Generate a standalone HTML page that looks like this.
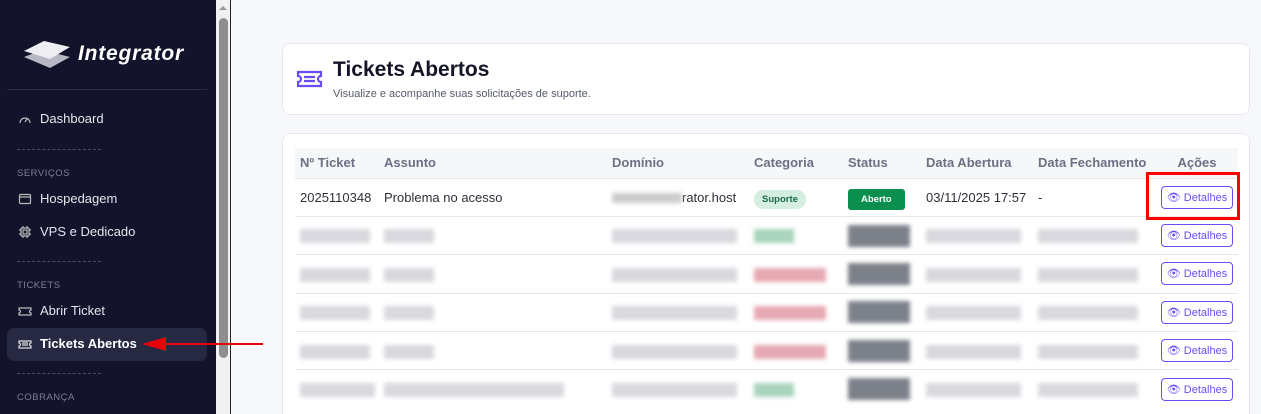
<!DOCTYPE html>
<html><head><meta charset="utf-8"><style>
*{box-sizing:border-box;margin:0;padding:0}
html{width:1261px;height:414px;overflow:hidden}
body{width:1261px;height:414px;overflow:hidden;background:#f7f8fb;font-family:"Liberation Sans",sans-serif;position:relative}
.sb{position:absolute;left:0;top:0;width:216px;height:414px;background:#13132b;color:#e4e6ef}
.scroll{position:absolute;left:216px;top:0;width:15px;height:414px;background:#f1f1f1;border-right:1px solid #222}
.thumb{position:absolute;left:219px;top:18px;width:9px;height:340px;background:#8e8e8e;border-radius:5px}
.item{position:absolute;left:18px;font-size:13px;display:flex;align-items:center;gap:8px}
.item svg{width:14px;height:14px}
.sec{position:absolute;left:17px;font-size:9.5px;color:#7d7f96;letter-spacing:.5px}
.dash{position:absolute;left:17px;width:84px;border-top:1px dashed #4a4c66}
.card{position:absolute;left:282px;width:968px;background:#fff;border-radius:8px;border:1px solid #e8e9ee}
th{font-size:13px;color:#6b7084;text-align:left;font-weight:bold;height:30px;background:#f6f7f9;padding-left:5px}
td{height:38.4px;border-top:1px solid #e6e7eb;font-size:13px;color:#2d2f3a;padding-left:5px;position:relative}
table{border-collapse:collapse;position:absolute;left:12px;top:14px;width:943px}
.btn{display:inline-flex;align-items:center;gap:3px;border:1px solid #6a4cf5;color:#6a4cf5;border-radius:4px;height:23px;padding:0 5px;font-size:11px;background:#fff}
.b{display:inline-block;height:14px;background:#d8d9df;filter:blur(2px);vertical-align:middle}
</style></head><body>
<div class="sb">
 <svg style="position:absolute;left:22px;top:37px" width="50" height="34" viewBox="0 0 50 34"><path d="M2 20 L20 13 L48 20 L28 31 Z" fill="#b8b8c4"/><path d="M2 14 L22 4 L48 10 L28 22 Z" fill="#eeeef2"/></svg>
 <div style="position:absolute;left:78px;top:42px;font-size:21px;font-style:italic;font-weight:bold;color:#fff;letter-spacing:.8px">Integrator</div>
 <div style="position:absolute;left:7px;top:89px;width:200px;border-top:1px solid #2c2e48"></div>
 <div class="item" style="top:111px"><svg viewBox="0 0 14 14" fill="none" stroke="#bbb" stroke-width="1.2"><path d="M2 11a5 5 0 1 1 10 0M7 10l2-3"/></svg>Dashboard</div>
 <div class="dash" style="top:149px"></div>
 <div class="sec" style="top:168px">SERVIÇOS</div>
 <div class="item" style="top:191px"><svg viewBox="0 0 14 14" fill="none" stroke="#bbb" stroke-width="1.2"><rect x="1.5" y="2.5" width="11" height="9" rx="1"/><path d="M1.5 5h11"/></svg>Hospedagem</div>
 <div class="item" style="top:224px"><svg viewBox="0 0 14 14" fill="none" stroke="#bbb" stroke-width="1.2"><rect x="3" y="3" width="8" height="8" rx="1"/><rect x="5" y="5" width="4" height="4"/><path d="M5 1v2M9 1v2M5 11v2M9 11v2M1 5h2M1 9h2M11 5h2M11 9h2"/></svg>VPS e Dedicado</div>
 <div class="dash" style="top:261px"></div>
 <div class="sec" style="top:280px">TICKETS</div>
 <div class="item" style="top:303px"><svg viewBox="0 0 14 14" fill="none" stroke="#bbb" stroke-width="1.2"><path d="M1 4h12v2a1.5 1.5 0 0 0 0 3v2H1V9a1.5 1.5 0 0 0 0-3z"/></svg>Abrir Ticket</div>
 <div style="position:absolute;left:7px;top:328px;width:200px;height:33px;background:#272842;border-radius:7px"></div>
 <div class="item" style="top:336px;font-weight:bold;color:#fff"><svg viewBox="0 0 14 14" fill="none" stroke="#ddd" stroke-width="1.2"><path d="M1 4h12v2a1.5 1.5 0 0 0 0 3v2H1V9a1.5 1.5 0 0 0 0-3z M4 6h6M4 8h6"/></svg>Tickets Abertos</div>
 <div class="dash" style="top:373px"></div>
 <div class="sec" style="top:392px">COBRANÇA</div>
</div>
<div class="scroll"></div><div class="thumb"></div>
<div style="position:absolute;left:219px;top:6px;width:0;height:0;border-left:4px solid transparent;border-right:4px solid transparent;border-bottom:4px solid #999"></div>
<svg style="position:absolute;left:140px;top:336px" width="125" height="16"><line x1="14" y1="8" x2="123" y2="8" stroke="#e8000b" stroke-width="2"/><path d="M2 8 L26 1 L26 15Z" fill="#e8000b"/></svg>
<div class="card" style="top:43px;height:72px">
 <svg style="position:absolute;left:13px;top:26px" width="27" height="18" viewBox="0 0 27 18" fill="none" stroke="#6a4cf5" stroke-width="2.2"><path d="M2 2h23v4a3 3 0 0 0 0 6v4H2v-4a3 3 0 0 0 0-6z"/><path d="M8 7h11M8 11h11"/></svg>
 <div style="position:absolute;left:50px;top:14px;font-size:21px;font-weight:bold;color:#151528">Tickets Abertos</div>
 <div style="position:absolute;left:50px;top:44px;font-size:11px;color:#555a6a">Visualize e acompanhe suas solicitações de suporte.</div>
</div>
<div class="card" style="top:133px;height:290px">
<table>
<tr><th style="width:84px">Nº Ticket</th><th style="width:228px">Assunto</th><th style="width:142px">Domínio</th><th style="width:94px">Categoria</th><th style="width:78px">Status</th><th style="width:112px">Data Abertura</th><th style="width:118px">Data Fechamento</th><th style="text-align:center">Ações</th></tr>
<tr><td>2025110348</td><td>Problema no acesso</td><td><span class="b" style="width:70px;height:10px;background:#ccc"></span>rator.host</td><td><span style="background:#d4efe2;color:#1c6b45;font-size:9.5px;font-weight:bold;padding:4px 8px;border-radius:9px">Suporte</span></td><td><span style="background:#0a8f4f;color:#fff;font-size:9.5px;font-weight:bold;padding:5px 13px;border-radius:3px">Aberto</span></td><td>03/11/2025 17:57</td><td>-</td><td style="text-align:center"><span class="btn">👁 Detalhes</span></td></tr>
<tr><td><span class="b" style="width:70px"></span></td><td><span class="b" style="width:50px"></span></td><td><span class="b" style="width:125px"></span></td><td><span class="b" style="width:40px;background:#a9d4bd"></span></td><td><span class="b" style="width:62px;height:22px;background:#7c8089"></span></td><td><span class="b" style="width:95px"></span></td><td><span class="b" style="width:100px"></span></td><td style="text-align:center"><span class="btn">👁 Detalhes</span></td></tr>
<tr><td><span class="b" style="width:70px"></span></td><td><span class="b" style="width:50px"></span></td><td><span class="b" style="width:125px"></span></td><td><span class="b" style="width:72px;background:#e6a9b3"></span></td><td><span class="b" style="width:62px;height:22px;background:#7c8089"></span></td><td><span class="b" style="width:95px"></span></td><td><span class="b" style="width:100px"></span></td><td style="text-align:center"><span class="btn">👁 Detalhes</span></td></tr>
<tr><td><span class="b" style="width:70px"></span></td><td><span class="b" style="width:50px"></span></td><td><span class="b" style="width:125px"></span></td><td><span class="b" style="width:72px;background:#e6a9b3"></span></td><td><span class="b" style="width:62px;height:22px;background:#7c8089"></span></td><td><span class="b" style="width:95px"></span></td><td><span class="b" style="width:100px"></span></td><td style="text-align:center"><span class="btn">👁 Detalhes</span></td></tr>
<tr><td><span class="b" style="width:70px"></span></td><td><span class="b" style="width:50px"></span></td><td><span class="b" style="width:125px"></span></td><td><span class="b" style="width:72px;background:#e6a9b3"></span></td><td><span class="b" style="width:62px;height:22px;background:#7c8089"></span></td><td><span class="b" style="width:95px"></span></td><td><span class="b" style="width:100px"></span></td><td style="text-align:center"><span class="btn">👁 Detalhes</span></td></tr>
<tr><td><span class="b" style="width:75px"></span></td><td><span class="b" style="width:180px"></span></td><td><span class="b" style="width:125px"></span></td><td><span class="b" style="width:40px;background:#a9d4bd"></span></td><td><span class="b" style="width:62px;height:22px;background:#7c8089"></span></td><td><span class="b" style="width:95px"></span></td><td><span class="b" style="width:100px"></span></td><td style="text-align:center"><span class="btn">👁 Detalhes</span></td></tr>
</table>
</div>
<div style="position:absolute;left:1146px;top:172px;width:94px;height:48px;border:3px solid #f00"></div>
</body></html>
